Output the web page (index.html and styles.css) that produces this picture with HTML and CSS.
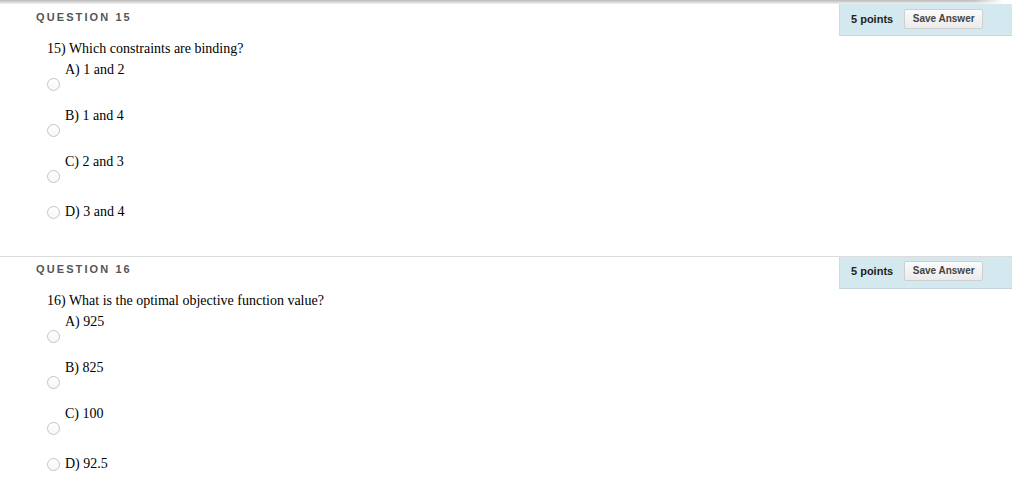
FILE: index.html
```html
<!DOCTYPE html>
<html>
<head>
<meta charset="utf-8">
<link rel="stylesheet" href="styles.css">
</head>
<body>
<div class="page">
  <div class="topshadow"></div>

  <section class="question">
    <div class="q-header">
      <h3 class="q-title">QUESTION 15</h3>
      <div class="points">
        <span class="pts">5 points</span>
        <button class="save">Save Answer</button>
      </div>
    </div>
    <div class="q-body">
      <p class="q-text">15) Which constraints are binding?</p>
      <div class="option">
        <div class="opt-label">A) 1 and 2</div>
        <span class="radio"></span>
      </div>
      <div class="option">
        <div class="opt-label">B) 1 and 4</div>
        <span class="radio"></span>
      </div>
      <div class="option">
        <div class="opt-label">C) 2 and 3</div>
        <span class="radio"></span>
      </div>
      <div class="option-inline">
        <span class="radio"></span>
        <span class="opt-inline-label">D) 3 and 4</span>
      </div>
    </div>
  </section>

  <section class="question second">
    <div class="q-header">
      <h3 class="q-title">QUESTION 16</h3>
      <div class="points">
        <span class="pts">5 points</span>
        <button class="save">Save Answer</button>
      </div>
    </div>
    <div class="q-body">
      <p class="q-text">16) What is the optimal objective function value?</p>
      <div class="option">
        <div class="opt-label">A) 925</div>
        <span class="radio"></span>
      </div>
      <div class="option">
        <div class="opt-label">B) 825</div>
        <span class="radio"></span>
      </div>
      <div class="option">
        <div class="opt-label">C) 100</div>
        <span class="radio"></span>
      </div>
      <div class="option-inline">
        <span class="radio"></span>
        <span class="opt-inline-label">D) 92.5</span>
      </div>
    </div>
  </section>
</div>
</body>
</html>
```

FILE: styles.css
```css
* { box-sizing: border-box; }
html, body { margin: 0; padding: 0; background: #fff; }
body { font-family: "Liberation Serif", "Times New Roman", serif; color: #000; }

.page { width: 1012px; display: flex; flex-direction: column; }

.topshadow {
  height: 4px;
  width: 1004px;
  background: linear-gradient(to bottom, #b9b9b9 0%, #d6d6d6 50%, #f2f2f2 100%);
  -webkit-mask-image: linear-gradient(to right, #000 97%, transparent 100%);
  mask-image: linear-gradient(to right, #000 97%, transparent 100%);
}

.question.second { border-top: 1px solid #dcdcdc; margin-top: 37px; }

.q-header {
  display: flex;
  justify-content: space-between;
  align-items: flex-start;
  height: 32px;
}
.second .q-header { height: 31px; }

.q-title {
  margin: 0;
  padding: 8px 0 0 36px;
  font-family: "Liberation Sans", Arial, sans-serif;
  font-weight: bold;
  font-size: 11px;
  line-height: 11px;
  letter-spacing: 2.1px;
  color: #555;
}
.second .q-title { padding-top: 7px; }

.points {
  width: 173px;
  height: 32px;
  background: #d4e9ef;
  border-left: 1px solid #c9dde3;
  border-bottom: 1px solid #c3d6dc;
  display: flex;
  align-items: center;
  padding-left: 11px;
  padding-bottom: 2px;
}
.second .points { height: 32px; padding-bottom: 4px; }

.pts {
  font-family: "Liberation Sans", Arial, sans-serif;
  font-weight: bold;
  font-size: 11px;
  color: #222;
  margin-right: 11px;
}

.save {
  width: 79px;
  height: 20px;
  margin: 0;
  padding: 0;
  font-family: "Liberation Sans", Arial, sans-serif;
  font-weight: bold;
  font-size: 10px;
  color: #444;
  background: linear-gradient(to bottom, #fbfbfb, #ebebeb);
  border: 1px solid #cfcfcf;
  border-radius: 2px;
}

.q-body {
  padding-left: 47px;
  display: flex;
  flex-direction: column;
  align-items: flex-start;
}

.q-text {
  margin: 6px 0 0 0;
  font-size: 14px;
  line-height: 14px;
}

.option {
  display: flex;
  flex-direction: column;
  align-items: flex-start;
  margin-top: 18px;
}
.q-text + .option { margin-top: 7px; }

.opt-label {
  padding-left: 18px;
  font-size: 14px;
  line-height: 14px;
}

.radio {
  display: block;
  flex: none;
  width: 13px;
  height: 13px;
  border: 1px solid #c4c4c4;
  border-radius: 50%;
  background: linear-gradient(to bottom, #fff, #f6f6f6);
  margin-top: 1px;
}

.option-inline {
  display: flex;
  align-items: center;
  margin-top: 22px;
  height: 14px;
}
.option-inline .radio { margin: 0 5px 0 0; }
.opt-inline-label { font-size: 14px; line-height: 14px; }
```
